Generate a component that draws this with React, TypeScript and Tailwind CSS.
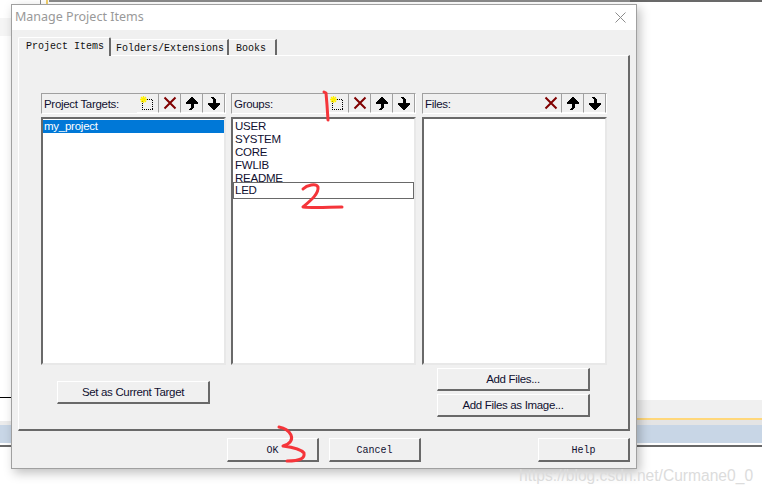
const sans = "font-['Liberation_Sans',Arial,sans-serif]";
const mono = "font-['Liberation_Mono','Courier_New',monospace]";

function NewIcon() {
  return (
    <svg width="14" height="14" viewBox="0 0 14 14" className="-ml-[2px]">
      <rect x="2.5" y="3.5" width="10" height="10" fill="none" stroke="#000" strokeDasharray="1 1" shapeRendering="crispEdges" />
      <path d="M3.5 0v7M0 3.5h7M1 1l5 5M6 1l-5 5" stroke="#fff000" strokeWidth="1.3" />
    </svg>
  );
}

function DeleteIcon() {
  return (
    <svg width="14" height="14" viewBox="0 0 14 14">
      <path d="M1.5 1.5 12.5 12.5M12.5 1.5 1.5 12.5" stroke="#800000" strokeWidth="2" />
    </svg>
  );
}

function UpIcon() {
  return (
    <svg width="12" height="13" viewBox="0 0 12 13" shapeRendering="crispEdges">
      <path d="M6 0h1v1h1v1h1v1h1v1h1v1h1v2H8v3L7 11v1H6v1H3v-1h1v-1h1V7H0V5h1V4h1V3h1V2h1V1h1V0z" fill="#000" />
    </svg>
  );
}

function DownIcon() {
  return (
    <svg width="12" height="13" viewBox="0 0 12 13" shapeRendering="crispEdges">
      <path d="M6 13h1v-1h1v-1h1v-1h1V9h1V8h1V6H8V3L7 2V1H6V0H3v1h1v1h1v4H0v2h1v1h1v1h1v1h1v1h1v1z" fill="#000" />
    </svg>
  );
}

function ToolButton({ children }: { children: React.ReactNode }) {
  return (
    <div className="w-[22px] h-[19px] flex items-center justify-center border-r border-r-[#a0a0a0] border-b border-b-white">
      {children}
    </div>
  );
}

function Button({ label, className, font }: { label: string; className: string; font: string }) {
  return (
    <div className={`flex items-center justify-center pt-px border border-white border-r-2 border-b-2 border-r-[#696969] border-b-[#696969] text-[#101030] ${font} ${className}`}>
      {label}
    </div>
  );
}

function Column({ title, hasNew, children }: { title: string; hasNew?: boolean; children?: React.ReactNode }) {
  return (
    <div className="w-[185px] flex flex-col gap-[3px]">
      <div className="h-[21px] flex items-end justify-between border border-[#a0a0a0] border-r-white border-b-white">
        <span className={`self-center pt-[3px] pl-[2px] text-[11.5px] tracking-[-0.3px] text-[#101030] ${sans}`}>{title}</span>
        <div className="flex">
          {hasNew && <ToolButton><NewIcon /></ToolButton>}
          <ToolButton><DeleteIcon /></ToolButton>
          <ToolButton><UpIcon /></ToolButton>
          <ToolButton><DownIcon /></ToolButton>
        </div>
      </div>
      <div className={`h-[248px] pt-px bg-white border-2 border-t-[#696969] border-l-[#696969] border-r-[#e8e8e8] border-b-[#e8e8e8] text-[11.5px] tracking-[-0.25px] leading-[13px] text-[#101030] ${sans}`}>
        {children}
      </div>
    </div>
  );
}

export default function App() {
  return (
    <div className="relative w-[762px] h-[495px] bg-white overflow-hidden">
      {/* windows behind the dialog */}
      <div className="absolute left-0 top-[18px] w-[12px] h-[18px] bg-[#f5f5f5]" />
      <div className="absolute left-[40px] top-0 w-px h-[4px] bg-[#8a8a8a]" />
      <div className="absolute left-[46px] top-0 w-[2px] h-[4px] bg-[#f2cf6a]" />
      <div className="absolute left-[49px] top-0 w-[590px] h-[2px] bg-[#8a8a8a]" />
      <div className="absolute left-[630px] top-0 w-[132px] h-[2px] bg-[#696969]" />
      <div className="absolute left-0 top-[397px] w-[12px] h-px bg-black" />
      <div className="absolute left-0 top-[421px] w-[12px] h-[4px] bg-[#ececec]" />
      <div className="absolute left-0 top-[425px] w-[12px] h-[18px] bg-[#c8d6e6]" />
      <div className="absolute left-0 top-[445px] w-[12px] h-[2px] bg-[#696969]" />
      <div className="absolute left-[637px] top-[400px] w-[125px] flex flex-col">
        <div className="h-[18px] bg-[#f0f0f0]" />
        <div className="h-[2px] bg-[#ffd77a]" />
        <div className="h-[5px] bg-[#e4e4e4]" />
        <div className="h-[18px] bg-[#c8d6e6]" />
        <div className="h-[2px] bg-white" />
        <div className="h-[2px] bg-[#696969]" />
      </div>

      {/* dialog */}
      <div className="absolute left-[11px] top-[4px] w-[626px] h-[465px] flex flex-col bg-[#f0f0f0] border border-[#a0a0a0] shadow-[3px_4px_10px_rgba(0,0,0,0.25)]">
        <div className="h-[25px] shrink-0 bg-white flex items-center justify-between pl-[3px] pr-[10px]">
          <span className="text-[12.5px] text-[#999999] font-['Noto_Sans',sans-serif]">Manage Project Items</span>
          <svg width="11" height="11" viewBox="0 0 11 11">
            <path d="M.5.5 10.5 10.5M10.5.5.5 10.5" stroke="#8c8c8c" strokeWidth="1" />
          </svg>
        </div>

        <div className="flex-1 flex flex-col pl-[6px] pt-[7px]">
          <div className={`h-[18px] flex items-end text-[10px] text-[#101010] ${mono}`}>
            <div className="w-[93px] h-[19px] relative z-10 -mb-px flex items-center pl-[7px] pb-[2px] bg-[#f0f0f0] border-t border-l border-white border-r-2 border-r-[#696969] rounded-t-[2px]">Project Items</div>
            <div className="w-[118px] h-[16px] flex items-center pl-[5px] pt-px border-t border-white border-r-2 border-r-[#696969]">Folders/Extensions</div>
            <div className="w-[48px] h-[16px] flex items-center pl-[7px] pt-px border-t border-white border-r-2 border-r-[#696969]">Books</div>
          </div>

          <div className="w-[612px] h-[376px] border border-white border-r-2 border-b-2 border-r-[#696969] border-b-[#696969] pl-[22px] pt-[37px]">
            <div className="flex gap-[5px]">
              <Column title="Project Targets:" hasNew>
                <div className="h-[13px] bg-[#0078d7] text-white pl-[1px] leading-[13px]">my_project</div>
              </Column>
              <Column title="Groups:" hasNew>
                {["USER", "SYSTEM", "CORE", "FWLIB", "README"].map((g) => (
                  <div key={g} className="pl-[2px]">{g}</div>
                ))}
                <div className="relative -mt-[3px] h-[17px] bg-white border border-[#696969] pl-px flex items-center">LED</div>
              </Column>
              <div className="pl-px">
                <Column title="Files:" />
              </div>
            </div>

            <div className="flex justify-between pl-[16px] pr-[38px] text-[11.5px] tracking-[-0.33px]">
              <Button label="Set as Current Target" font={sans} className="w-[153px] h-[23px] mt-[16px]" />
              <div className="flex flex-col gap-[3px] mt-[3px]">
                <Button label="Add Files..." font={sans} className="w-[153px] h-[23px]" />
                <Button label="Add Files as Image..." font={sans} className="w-[153px] h-[23px]" />
              </div>
            </div>
          </div>

          <div className="flex w-[612px] pt-[7px] text-[10px]">
            <Button label="OK" font={mono} className="w-[92px] h-[24px] ml-[209px]" />
            <Button label="Cancel" font={mono} className="w-[92px] h-[24px] ml-[10px]" />
            <Button label="Help" font={mono} className="w-[92px] h-[24px] ml-[117px]" />
          </div>
        </div>
      </div>

      {/* red pen marks */}
      <svg className="absolute inset-0 pointer-events-none" width="762" height="495" fill="none" stroke="#f5353a" strokeWidth="3" strokeLinecap="round" strokeLinejoin="round">
        <path d="M324 92 326 93 327 105 328 120" />
        <path d="M303 189C307 185 316 183 318 187 319 194 310 201 303 207 315 208 330 207 342 207" />
        <path d="M279 427C285 428 289 431 291 435 293 440 290 444 283 446 291 447 301 449 304 453 305 458 301 461 287 461" />
      </svg>

      <span className={`absolute left-[519px] top-[466px] text-[15.6px] leading-[20px] whitespace-nowrap text-[#dcdcdc] ${sans}`}>https://blog.csdn.net/Curmane0_0</span>
    </div>
  );
}
